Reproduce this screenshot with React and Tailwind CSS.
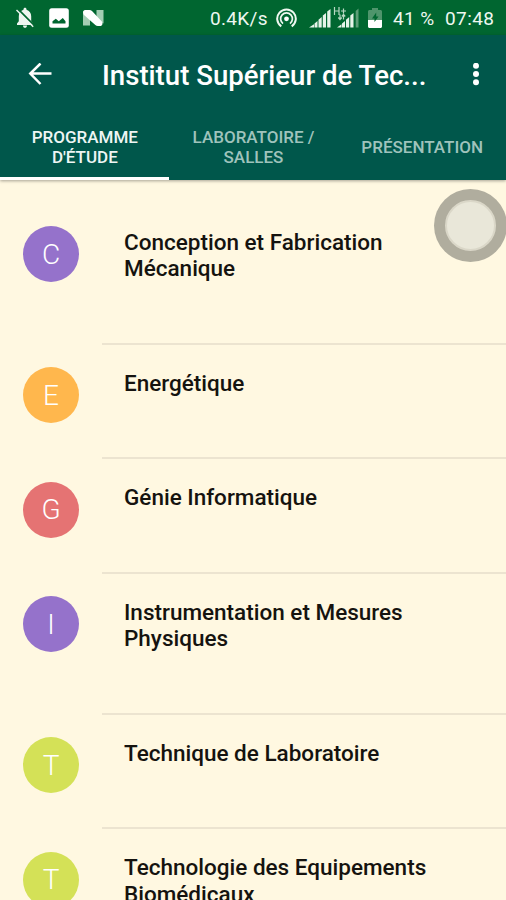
import React from 'react';
import clsx from 'clsx';

const programmes = [
  { letter: 'C', color: 'bg-[#9572cb]', lines: ['Conception et Fabrication', 'Mécanique'] },
  { letter: 'E', color: 'bg-[#ffb74d]', lines: ['Energétique'] },
  { letter: 'G', color: 'bg-[#e57373]', lines: ['Génie Informatique'] },
  { letter: 'I', color: 'bg-[#9572cb]', lines: ['Instrumentation et Mesures', 'Physiques'] },
  { letter: 'T', color: 'bg-[#d4e157]', lines: ['Technique de Laboratoire'] },
  { letter: 'T', color: 'bg-[#d4e157]', lines: ['Technologie des Equipements', 'Biomédicaux'] }
];

const tabs = [
  { lines: ['PROGRAMME', "D'ÉTUDE"], active: true },
  { lines: ['LABORATOIRE /', 'SALLES'] },
  { lines: ['PRÉSENTATION'] }
];

const BellOffIcon = () => <svg className="h-[22px] w-[20px]" viewBox="0 0 20 22" fill="none">
    <path d="M10 0.800c-.9 0-1.500.7-1.500 1.500v.5C5.500 3.600 3.800 6.200 3.800 9.300v5L2 16.600v1.400h16v-1.400l-1.800-2.300v-5c0-3.100-1.700-5.700-4.700-6.500v-.5c0-.8-.6-1.500-1.500-1.500zM8 18.400h4c0 1.400-.9 2.400-2 2.400s-2-1-2-2.400z" fill="#eef6f0" />
    <path d="M2.800 1.800L19 18.200" stroke="#006630" strokeWidth="1.800" />
    <path d="M1.500 3L18.200 19.700" stroke="#eef6f0" strokeWidth="1.400" />
  </svg>;

const PictureIcon = () => <svg className="h-5 w-5" viewBox="0 0 20 20">
    <rect x="0.200" y="0.200" width="19.600" height="19.600" rx="2.500" fill="#fff" />
    <path d="M3.500 15.500v-2.300l3.300-2.400 3 2.400 4-3.200 2.700 3.200v2.300z" fill="#006630" />
  </svg>;

const NougatIcon = () => <svg className="h-[18px] w-[22px]" viewBox="0 0 22 18">
    <path d="M1 4l7 3.500v9H1zM14.500 1H21.500v13.500l-7-4z" fill="#a3cdb3" />
    <path d="M1 3c0-1 1-2 2-2h4.500c1 0 1.800.3 2.500 1L19.800 12.500c1.200 1.200 1 4-1 4.500h-3c-1 0-1.700-.3-2.500-1L2 6C1.200 5.200 1 4 1 3z" fill="#fff" />
  </svg>;

const HotspotIcon = () => <svg className="h-[21px] w-[21px]" viewBox="0 0 21 21" fill="none" stroke="#eef8f0" strokeWidth="2">
    <path d="M5.300 18.400a9.300 9.300 0 1 1 10.400 0" />
    <path d="M7 15.600a5.900 5.900 0 1 1 7 0" strokeWidth="1.700" />
    <circle cx="10.500" cy="10.800" r="2.400" fill="#fff" stroke="none" />
  </svg>;

const SignalIcon = () => <svg className="h-[22px] w-[50px]" viewBox="0 0 50 22">
    <g fill="#e6f3e9">
      <path d="M0 20.500l5-3.300v3.300zM5.500 16.500l3-2.500v6.500h-3zM9.500 12.700l3.200-2.600v10.400H9.500zM13.800 8.500l3.200-2.600v14.600h-3.200zM18.200 4.500l3.300-2.500v18.500h-3.300z" />
      <path d="M28 20.500l4.500-3.300v3.300zM33 16.500l3-2.500v6.500h-3zM37 12.700l3.200-2.600v10.400H37zM41.300 8.500l3.200-2.600v14.600h-3.200z" />
    </g>
    <path d="M46.700 4l2.800-2.500v19h-2.800z" fill="#5c9d77" />
    <path d="M25.500 0v8M30 0v8M25.500 4H30M32 4h5M34.500 1.500v5M31 7.500v5M29.300 10.500l1.700 2 1.700-2M34.500 12.500v-5M32.800 9.500l1.700-2 1.700 2" stroke="#b8d8c3" strokeWidth="1.200" fill="none" />
  </svg>;

const BatteryIcon = () => <svg className="h-5 w-[14px]" viewBox="0 0 14 20">
    <path d="M4 0h6v2h2.500c.8 0 1.500.6 1.500 1.500V12H0V3.500C0 2.600.7 2 1.500 2H4z" fill="#4f956c" />
    <path d="M0 12h14v6.500c0 .8-.7 1.500-1.500 1.500h-11C.7 20 0 19.300 0 18.500z" fill="#fff" />
    <path d="M8.200 4.500L4 10.500h2.500V14L10.500 8.500H8.200z" fill="#006630" />
  </svg>;

const StatusBar = () => <div className="flex h-[35px] items-center bg-[#006630] pl-[15px] text-[19px] leading-5 text-[#eef8f0]">
    <BellOffIcon />
    <div className="ml-[14px]"><PictureIcon /></div>
    <div className="ml-[13px]"><NougatIcon /></div>
    <span className="ml-[106px] w-[60px] pt-[2px] tracking-[0.300px]">0.4K/s</span>
    <div className="ml-[6px] pt-px"><HotspotIcon /></div>
    <div className="ml-[12px]"><SignalIcon /></div>
    <div className="ml-[9px] pt-px"><BatteryIcon /></div>
    <span className="ml-[11px] w-[42px] whitespace-nowrap pt-[2px] tracking-[0.400px]">41 %</span>
    <span className="ml-[10px] whitespace-nowrap pt-[2px] tracking-[0.400px]">07:48</span>
  </div>;

const Toolbar = () => <div className="flex h-[80px] items-center text-white">
    <svg className="ml-[28px] h-6 w-6 shrink-0" viewBox="0 0 24 24" fill="none" stroke="currentColor" strokeWidth="2.500">
      <path d="M23.500 10.500H3M12.500 0.500L2.300 10.500l10.200 10.500" />
    </svg>
    <h1 className="ml-[50px] w-[331px] whitespace-nowrap pt-[2px] text-[27.600px] font-medium leading-8">Institut Supérieur de Tec...</h1>
    <svg className="ml-[39px] h-6 w-[8px]" viewBox="0 0 8 24" fill="currentColor">
      <circle cx="4" cy="2.800" r="3" />
      <circle cx="4" cy="10.900" r="3" />
      <circle cx="4" cy="19.200" r="3" />
    </svg>
  </div>;

const TabBar = () => <div className="grid h-[65px] grid-cols-3 text-center text-[17px] font-medium leading-5">
    {tabs.map(tab => <div key={tab.lines[0]} className={clsx('flex flex-col items-center justify-center border-b-[3px] pl-px pt-[2px]', tab.active ? 'border-white text-[#eef6f4]' : 'border-transparent text-[#9fc3bc]')}>
        {tab.lines.map(line => <span key={line} className="whitespace-nowrap">{line}</span>)}
      </div>)}
  </div>;

const ProgrammeRow = ({
  item
}) => <li className="flex pl-[23px]">
    <div className={clsx('mt-[22.500px] flex h-14 w-14 shrink-0 items-center justify-center rounded-full pt-px text-[28px] font-light text-white', item.color)}>
      {item.letter}
    </div>
    <div className={clsx('ml-[23px] flex-1 border-b-2 border-[#ece4d0] pl-[22px] pt-[25px] text-[22.500px] font-medium leading-[26.700px] text-[#15130f]', item.lines.length > 1 ? 'h-[141.300px]' : 'h-[114.400px]')}>
      {item.lines.map(line => <div key={line} className="whitespace-nowrap">{line}</div>)}
    </div>
  </li>;

const App = () => {
  return <div className="relative h-[900px] w-[506px] overflow-hidden bg-[#fff8e1] font-['Roboto',sans-serif]">
      <StatusBar />
      <header className="h-[145px] bg-[#00574b] shadow-[0_1px_3px_rgba(0,0,0,0.35)]">
        <Toolbar />
        <TabBar />
      </header>
      <ul className="pt-[23.500px]">
        {programmes.map(item => <ProgrammeRow key={item.lines[0]} item={item} />)}
      </ul>
      {/* floating assistive button */}
      <div className="absolute left-[434px] top-[189px] flex h-[73px] w-[73px] items-center justify-center rounded-full bg-[#b0ad9e]">
        <div className="h-[51px] w-[51px] rounded-full border-2 border-[#dad7c8] bg-[#e9e7d9]" />
      </div>
    </div>;
};
export default App;
